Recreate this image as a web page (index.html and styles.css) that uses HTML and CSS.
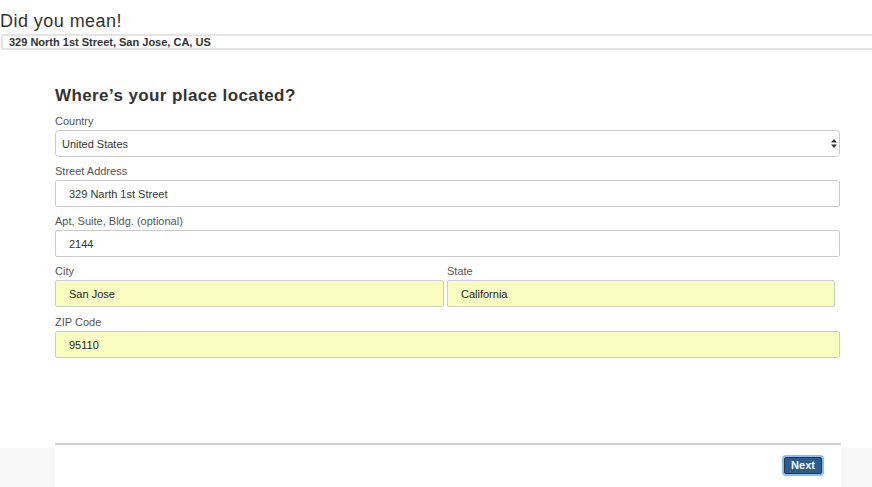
FILE: index.html
```html
<!DOCTYPE html>
<html lang="en">
<head>
<meta charset="utf-8">
<title>Where's your place located?</title>
<link rel="stylesheet" href="styles.css">
</head>
<body>
<div class="page">
  <section class="suggest">
    <h1 class="suggest-title">Did you mean!</h1>
    <div class="suggest-box">329 North 1st Street, San Jose, CA, US</div>
  </section>

  <main class="form-area">
    <h2 class="form-title">Where’s your place located?</h2>

    <div class="field">
      <label class="label">Country</label>
      <div class="select-wrap">
        <select class="control select">
          <option>United States</option>
        </select>
        <svg class="select-arrow" width="6" height="9" viewBox="0 0 6 9"><path d="M3 0 L6 3.5 L0 3.5 Z M0 5.5 L6 5.5 L3 9 Z" fill="#333"/></svg>
      </div>
    </div>

    <div class="field">
      <label class="label">Street Address</label>
      <input class="control input" type="text" value="329 Narth 1st Street">
    </div>

    <div class="field">
      <label class="label">Apt, Suite, Bldg. (optional)</label>
      <input class="control input" type="text" value="2144">
    </div>

    <div class="field-row">
      <div class="field">
        <label class="label">City</label>
        <input class="control input filled" type="text" value="San Jose">
      </div>
      <div class="field">
        <label class="label">State</label>
        <input class="control input filled" type="text" value="California">
      </div>
    </div>

    <div class="field">
      <label class="label">ZIP Code</label>
      <input class="control input filled" type="text" value="95110">
    </div>
  </main>

  <footer class="footer">
    <div class="footer-side footer-side-left"></div>
    <div class="footer-main">
      <button class="btn-next" type="button">Next</button>
    </div>
    <div class="footer-side footer-side-right"></div>
  </footer>
</div>
</body>
</html>
```

FILE: styles.css
```css
* { box-sizing: border-box; }

html, body {
  margin: 0;
  padding: 0;
  background: #ffffff;
}

body {
  font-family: "Liberation Sans", Arial, Helvetica, sans-serif;
  color: #333;
}

.page {
  height: 487px;
  display: flex;
  flex-direction: column;
  overflow: hidden;
}

/* ---- Did you mean ---- */
.suggest {
  padding-top: 11px;
}

.suggest-title {
  margin: 0;
  font-size: 18px;
  line-height: 21px;
  font-weight: normal;
  color: #333;
  letter-spacing: 0.45px;
}

.suggest-box {
  margin: 2px 0 0 1px;
  border: 2px solid #e4e4e4;
  border-right: none;
  height: 16px;
  padding: 0 0 0 6px;
  font-size: 11px;
  font-weight: bold;
  line-height: 12px;
  color: #333;
}

/* ---- Form ---- */
.form-area {
  padding: 36px 32px 0 55px;
}

.form-title {
  margin: 0 0 8px 0;
  font-size: 17px;
  line-height: 20px;
  font-weight: bold;
  color: #333;
  letter-spacing: 0.4px;
}

.field {
  display: flex;
  flex-direction: column;
  margin-bottom: 7px;
}

.label {
  display: block;
  font-size: 11px;
  line-height: 14px;
  color: #555;
  margin-bottom: 2px;
}

.control {
  display: block;
  width: 100%;
  height: 27px;
  border: 1px solid #cccccc;
  border-radius: 2px;
  background: #ffffff;
  font-family: "Liberation Sans", Arial, Helvetica, sans-serif;
  font-size: 11px;
  color: #333;
  margin: 0;
  outline: none;
}

.input {
  padding: 0 0 0 13px;
}

.filled {
  background: #fafdc0;
  color: #222;
}

.select-wrap {
  position: relative;
}

.select {
  appearance: none;
  -webkit-appearance: none;
  border-radius: 4px;
  padding: 0 0 0 6px;
}

.select-arrow {
  position: absolute;
  right: 3px;
  top: 9px;
}

.field-row {
  display: grid;
  grid-template-columns: 389px 388px;
  column-gap: 3px;
  margin-bottom: 1px;
}

/* ---- Footer ---- */
.footer {
  margin-top: auto;
  display: flex;
  align-items: flex-end;
  height: 44px;
}

.footer-side {
  height: 39px;
  background: #f8f8f8;
}

.footer-side-left { width: 55px; }
.footer-side-right { width: 31px; }

.footer-main {
  flex: 1;
  height: 44px;
  border-top: 2px solid #d0d0d0;
  display: flex;
  justify-content: flex-end;
  align-items: flex-start;
  padding: 12px 19px 0 0;
}

.btn-next {
  width: 38px;
  height: 17px;
  padding: 0;
  border: 1px solid #1a3a5c;
  border-radius: 2px;
  background: #2d5c8c;
  color: #ffffff;
  font-family: "Liberation Sans", Arial, Helvetica, sans-serif;
  font-size: 11px;
  font-weight: bold;
  line-height: 15px;
  box-shadow: 0 0 0 2px #8dbdec;
  cursor: pointer;
}
```
